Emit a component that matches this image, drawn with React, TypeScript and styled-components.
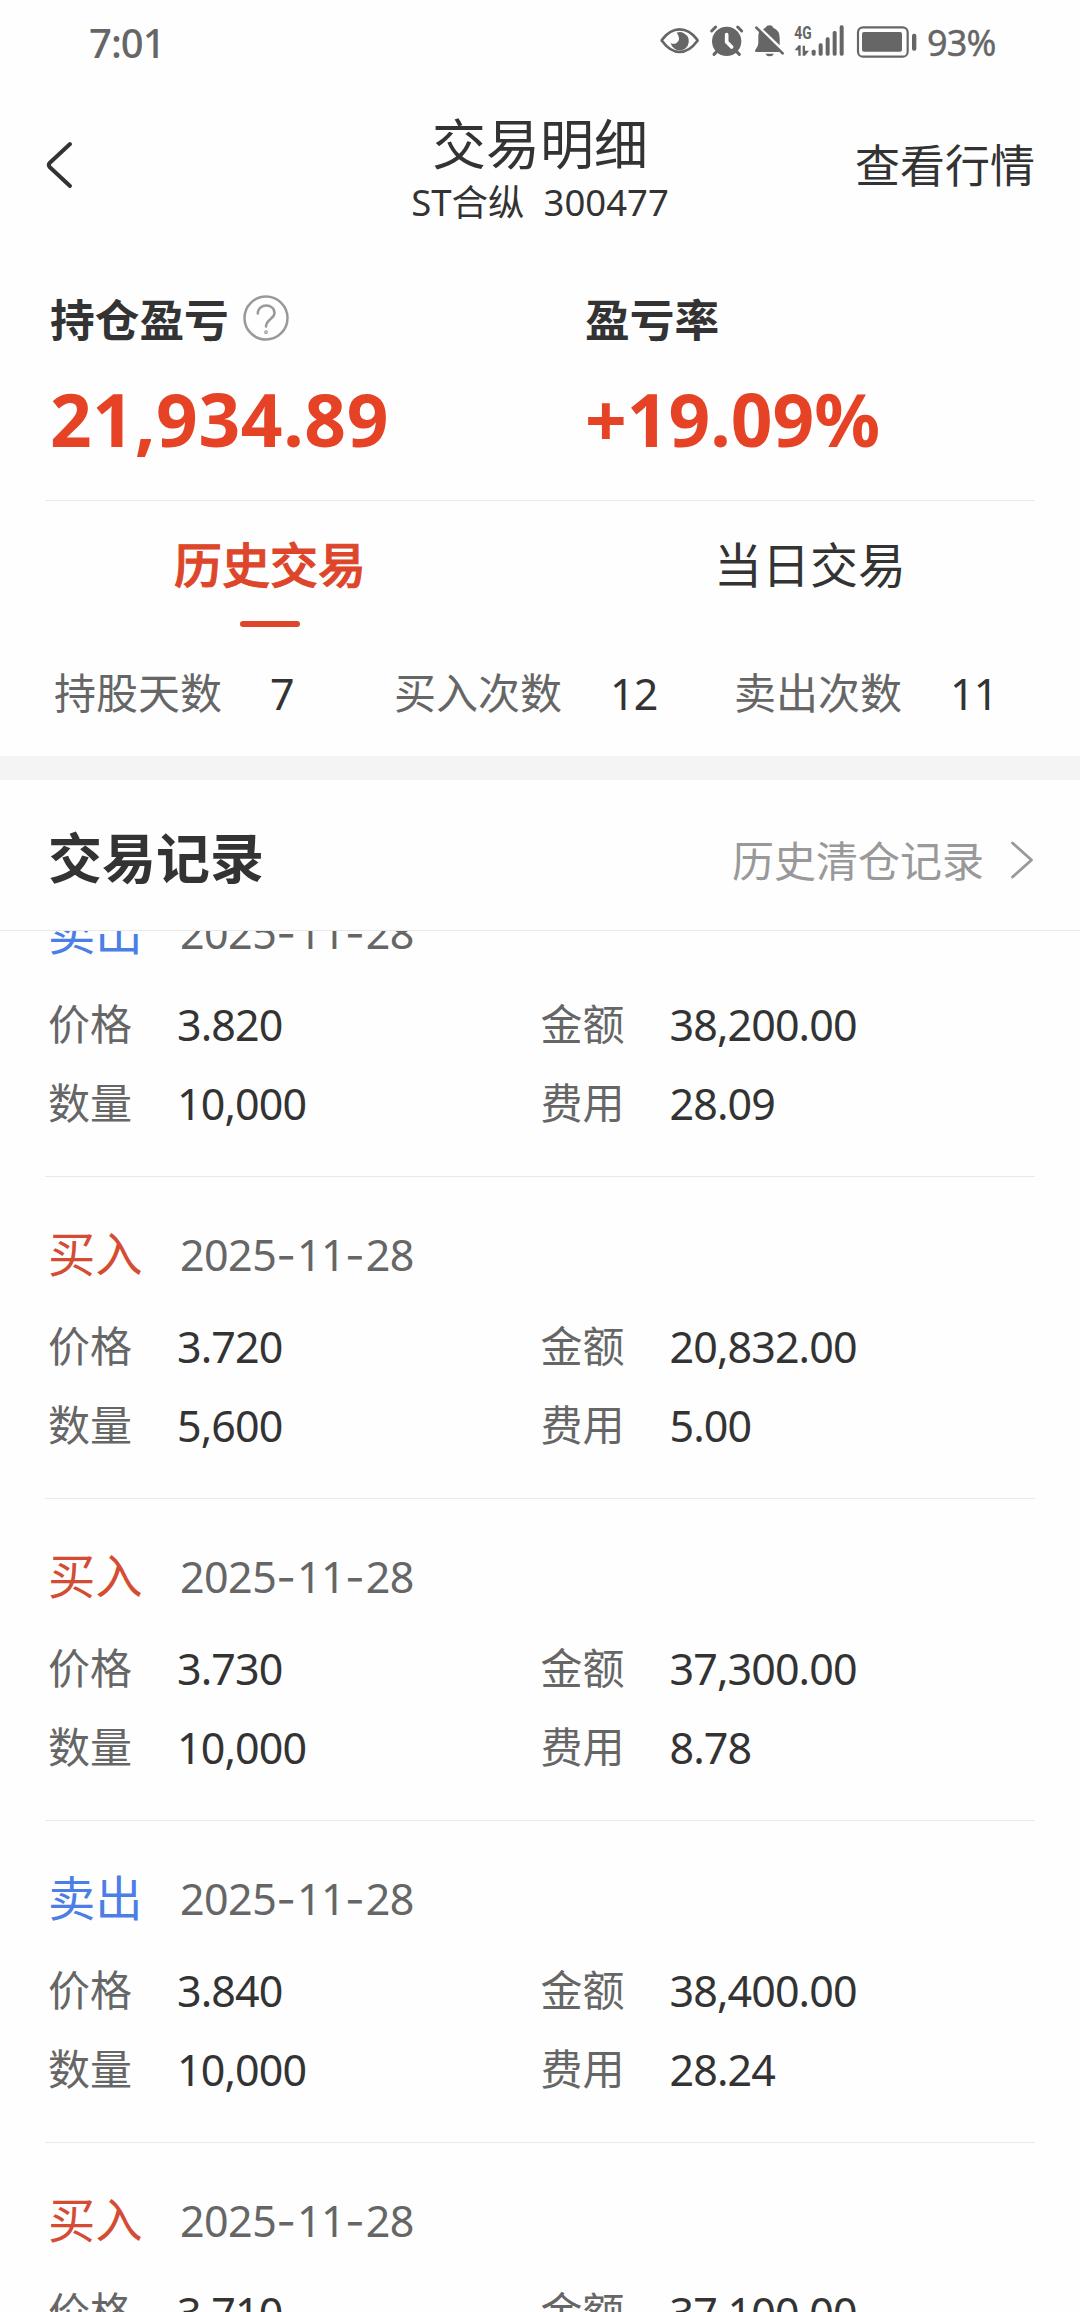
import React from "react";
import styled, { createGlobalStyle } from "styled-components";

const C = {
  bg: "#fefefe",
  text: "#333333",
  sub: "#666666",
  mute: "#999999",
  line: "#e9e9e9",
  band: "#f4f4f4",
  red: "#e64226",
  tabRed: "#dd462a",
  buy: "#d44c33",
  sell: "#4c7fe6",
};

const Global = createGlobalStyle`
  * { box-sizing: border-box; }
  body {
    margin: 0;
    background: ${C.bg};
    color: ${C.text};
    font-family: "Noto Sans", "Noto Sans CJK SC", sans-serif;
    -webkit-font-smoothing: antialiased;
  }
`;

const Screen = styled.div`
  width: 1080px;
  height: 2312px;
  display: flex;
  flex-direction: column;
  overflow: hidden;
  background: ${C.bg};
`;

/* Status bar */
const StatusBar = styled.div`
  height: 84px;
  flex: none;
  display: flex;
  align-items: center;
  justify-content: space-between;
  padding: 0 84px 0 89px;
  color: ${C.sub};
`;
const Clock = styled.span`
  font-size: 40px;
  line-height: 60px;
  letter-spacing: -1px;
  font-weight: 500;
  padding-top: 1px;
`;
const StatusIcons = styled.div`
  display: flex;
  align-items: center;
`;
const Glyph = styled.svg<{ $w: number; $gap: number }>`
  display: block;
  width: ${(p) => p.$w}px;
  height: 34px;
  margin-right: ${(p) => p.$gap}px;
  margin-top: -3px;
  fill: ${C.sub};
  overflow: visible;
`;
const Percent = styled.span`
  width: 69px;
  font-size: 36px;
  line-height: 60px;
  letter-spacing: -0.8px;
  white-space: nowrap;
  padding-top: 1px;
  -webkit-text-stroke: 0.4px ${C.sub};
`;

/* Header */
const Header = styled.header`
  height: 164px;
  flex: none;
  display: grid;
  grid-template-columns: 1fr auto 1fr;
  align-items: center;
  padding: 0 45px;
`;
const Back = styled.svg`
  display: block;
  width: 30px;
  height: 50px;
  margin-top: -2px;
  fill: none;
  stroke: ${C.text};
  stroke-width: 4;
  stroke-linecap: round;
  stroke-linejoin: round;
`;
const Heading = styled.div`
  margin-top: 12px;
  text-align: center;
`;
const Title = styled.div`
  font-size: 54px;
  line-height: 60px;
`;
const Subtitle = styled.div`
  font-size: 36.5px;
  line-height: 57px;
  white-space: pre;
`;
const HeaderLink = styled.div`
  justify-self: end;
  font-size: 45px;
  line-height: 60px;
`;

/* Summary */
const Summary = styled.section`
  height: 252px;
  flex: none;
  display: grid;
  grid-template-columns: 535px 1fr;
  padding: 42px 0 0 50px;
`;
const SummaryLabel = styled.div`
  display: flex;
  align-items: center;
  gap: 14px;
  font-size: 44.7px;
  line-height: 60px;
  font-weight: 700;
`;
const Help = styled.svg`
  display: block;
  width: 46px;
  height: 46px;
  margin-top: -4px;
  fill: none;
  stroke: ${C.mute};
  stroke-width: 2.5;
  stroke-linecap: round;
`;
const SummaryValue = styled.div<{ $track: number }>`
  margin-top: 24px;
  font-size: 73px;
  line-height: 90px;
  font-weight: 700;
  letter-spacing: ${(p) => p.$track}px;
  color: ${C.red};
`;
const Divider = styled.div`
  height: 1px;
  flex: none;
  margin: 0 45px;
  background: ${C.line};
`;

/* Tabs */
const Tabs = styled.nav`
  height: 126px;
  flex: none;
  display: grid;
  grid-template-columns: 1fr 1fr;
`;
const Tab = styled.div<{ $active?: boolean }>`
  display: flex;
  flex-direction: column;
  align-items: center;
  gap: 26px;
  padding-top: 34px;
  font-size: 48px;
  line-height: 60px;
  font-weight: ${(p) => (p.$active ? 500 : 400)};
  color: ${(p) => (p.$active ? C.tabRed : C.text)};
  -webkit-text-stroke: ${(p) => (p.$active ? `1px ${C.tabRed}` : "0")};
`;
const Indicator = styled.div`
  width: 60px;
  height: 6px;
  border-radius: 3px;
  background: ${C.tabRed};
`;

/* Counters */
const Stats = styled.div`
  height: 129px;
  flex: none;
  display: grid;
  grid-template-columns: repeat(3, 340px);
  align-items: center;
  padding: 2px 0 0 54px;
`;
const Stat = styled.div`
  display: flex;
  gap: 48px;
  line-height: 60px;
`;
const Label = styled.span`
  font-size: 42px;
  color: ${C.sub};
`;
const Num = styled.span`
  margin: 1px 0 -1px;
  font-size: 43px;
  letter-spacing: -0.9px;
`;
const Band = styled.div`
  height: 24px;
  flex: none;
  background: ${C.band};
`;

/* Records */
const RecordsHeader = styled.div`
  height: 151px;
  flex: none;
  display: flex;
  align-items: center;
  justify-content: space-between;
  padding: 5px 46px 0 48px;
  border-bottom: 1px solid ${C.line};
`;
const RecordsTitle = styled.h2`
  margin: 0;
  font-size: 54px;
  line-height: 70px;
  font-weight: 700;
`;
const More = styled.div`
  display: flex;
  align-items: center;
  gap: 26px;
  padding-top: 7px;
  font-size: 42px;
  line-height: 60px;
  color: ${C.mute};
`;
const Chevron = styled.svg`
  display: block;
  width: 24px;
  height: 40px;
  margin-top: -2px;
  fill: none;
  stroke: ${C.mute};
  stroke-width: 2.8;
  stroke-linecap: round;
  stroke-linejoin: round;
`;
const List = styled.div`
  flex: 1;
  min-height: 0;
  overflow: hidden;
`;
const Scrolled = styled.div`
  margin-top: -76px;
  padding: 0 45px;
`;
const Row = styled.article`
  height: 322px;
  padding: 48px 0 0 3px;
  border-bottom: 1px solid ${C.line};
`;
const RowHead = styled.div`
  display: flex;
  gap: 38px;
  line-height: 60px;
  margin-bottom: 31px;
`;
const Side = styled.span<{ $buy: boolean }>`
  width: 94px;
  margin: -1px 0 1px;
  font-size: 47.3px;
  white-space: nowrap;
  color: ${(p) => (p.$buy ? C.buy : C.sell)};
`;
const DateText = styled.span`
  font-size: 43px;
  letter-spacing: -0.55px;
  color: ${C.sub};
`;
const Dash = styled.span`
  font-family: Inter, sans-serif;
  letter-spacing: 0.9px;
`;
const Fields = styled.div`
  display: grid;
  grid-template-columns: 492.5px 1fr;
  row-gap: 19px;
`;
const Field = styled.div`
  display: flex;
  gap: 45px;
  line-height: 60px;
`;

const records = [
  { buy: false, date: "2025-11-28", price: "3.820", amount: "38,200.00", qty: "10,000", fee: "28.09" },
  { buy: true, date: "2025-11-28", price: "3.720", amount: "20,832.00", qty: "5,600", fee: "5.00" },
  { buy: true, date: "2025-11-28", price: "3.730", amount: "37,300.00", qty: "10,000", fee: "8.78" },
  { buy: false, date: "2025-11-28", price: "3.840", amount: "38,400.00", qty: "10,000", fee: "28.24" },
];

const lastRecord = { date: "2025-11-28", price: "3.710", amount: "37,100.00" };

const stats = [
  ["持股天数", "7"],
  ["买入次数", "12"],
  ["卖出次数", "11"],
];

function DateLabel({ value }: { value: string }) {
  const [y, m, d] = value.split("-");
  return (
    <DateText>
      {y}
      <Dash>-</Dash>
      {m}
      <Dash>-</Dash>
      {d}
    </DateText>
  );
}

function StatusGlyphs() {
  return (
    <>
      <Glyph $w={40} $gap={10} viewBox="64 70 120 102">
        <path d="M71 122 Q68 119 71 116 Q94 86 123 86 Q152 86 175 116 Q178 119 175 122 Q152 154 123 154 Q94 154 71 122Z" fill="none" stroke={C.sub} strokeWidth="8" strokeLinejoin="round" />
        <path d="M114 96 A27.5 27.5 0 1 1 96 126 Q106 133 114 126 Q124 119 120 108 Q118 101 114 96Z" />
      </Glyph>
      <Glyph $w={34} $gap={9.3} viewBox="214 70 102 102">
        <circle cx="264" cy="122" r="44" />
        <path d="M219 91 L231 79 M309 91 L297 79" stroke={C.sub} strokeWidth="9" strokeLinecap="round" />
        <path d="M226 161 L237 150 M302 161 L291 150" stroke={C.sub} strokeWidth="9" strokeLinecap="round" />
        <path d="M264 102 V124 L279 139" fill="none" stroke={C.bg} strokeWidth="11" strokeLinecap="round" strokeLinejoin="round" />
      </Glyph>
      <Glyph $w={31} $gap={9.7} viewBox="344 70 93 102">
        <path d="M378 81 Q382 74 391 74 Q399 74 402 81 Q421 89 421 111 V134 L371 86 Q374 83 378 81Z" />
        <path d="M360 92 L420 151 Q421 154 417 154 H350 Q345 153 348 148 Q357 137 357 128 V106 Q357 98 360 92Z" />
        <path d="M378 159 H404 Q400 167 391 167 Q382 167 378 159Z" />
        <path d="M351 81 L430 158" stroke={C.sub} strokeWidth="8" strokeLinecap="round" />
      </Glyph>
      <Glyph $w={51} $gap={10.7} viewBox="466 70 153 102">
        <text x="467" y="114" fontFamily="Roboto, sans-serif" fontWeight="700" fontSize="56" textLength="52" lengthAdjust="spacingAndGlyphs">4G</text>
        <path d="M468 149 L480 134 H486 V165 H479 V149Z M492 135 H499 V150 H511 L499 165 H492Z" />
        <rect x="519" y="147" width="12" height="18" rx="5" />
        <rect x="540" y="128" width="12" height="37" rx="5" />
        <rect x="561" y="110" width="12" height="55" rx="5" />
        <rect x="582" y="91" width="12" height="74" rx="5" />
        <rect x="603" y="74" width="12" height="91" rx="5" />
      </Glyph>
      <Glyph $w={61} $gap={10} viewBox="651 70 183 102">
        <rect x="657" y="80" width="149" height="88" rx="15" fill="none" stroke={C.sub} strokeWidth="6.5" />
        <rect x="669" y="94" width="120" height="59" rx="6" />
        <rect x="819" y="99" width="13" height="51" rx="6" />
      </Glyph>
    </>
  );
}

export default function App() {
  return (
    <Screen>
      <Global />
      <StatusBar>
        <Clock>7:01</Clock>
        <StatusIcons>
          <StatusGlyphs />
          <Percent>93%</Percent>
        </StatusIcons>
      </StatusBar>

      <Header>
        <Back viewBox="0 0 30 50">
          <path d="M25 4 L4.6 23 Q3 25 4.6 27 L25 46" />
        </Back>
        <Heading>
          <Title>交易明细</Title>
          <Subtitle>{"ST合纵  300477"}</Subtitle>
        </Heading>
        <HeaderLink>查看行情</HeaderLink>
      </Header>

      <Summary>
        <div>
          <SummaryLabel>
            持仓盈亏
            <Help viewBox="0 0 46 46">
              <circle cx="23" cy="23" r="21.5" />
              <path d="M14.8 18.5 C14.8 8 31.5 8 31.5 18 C31.5 24 23 24 23 31.5" />
              <circle cx="23" cy="37.2" r="0.6" />
            </Help>
          </SummaryLabel>
          <SummaryValue $track={0.6}>21,934.89</SummaryValue>
        </div>
        <div>
          <SummaryLabel>盈亏率</SummaryLabel>
          <SummaryValue $track={0}>+19.09%</SummaryValue>
        </div>
      </Summary>
      <Divider />

      <Tabs>
        <Tab $active>
          历史交易
          <Indicator />
        </Tab>
        <Tab>当日交易</Tab>
      </Tabs>

      <Stats>
        {stats.map(([label, value]) => (
          <Stat key={label}>
            <Label>{label}</Label>
            <Num>{value}</Num>
          </Stat>
        ))}
      </Stats>
      <Band />

      <RecordsHeader>
        <RecordsTitle>交易记录</RecordsTitle>
        <More>
          历史清仓记录
          <Chevron viewBox="0 0 24 40">
            <path d="M2.5 3 L21.5 20 L2.5 37" />
          </Chevron>
        </More>
      </RecordsHeader>

      <List>
        <Scrolled>
          {records.map((r, i) => (
            <Row key={i}>
              <RowHead>
                <Side $buy={r.buy}>{r.buy ? "买入" : "卖出"}</Side>
                <DateLabel value={r.date} />
              </RowHead>
              <Fields>
                <Field><Label>价格</Label><Num>{r.price}</Num></Field>
                <Field><Label>金额</Label><Num>{r.amount}</Num></Field>
                <Field><Label>数量</Label><Num>{r.qty}</Num></Field>
                <Field><Label>费用</Label><Num>{r.fee}</Num></Field>
              </Fields>
            </Row>
          ))}
          <Row>
            <RowHead>
              <Side $buy>买入</Side>
              <DateLabel value={lastRecord.date} />
            </RowHead>
            <Fields>
              <Field><Label>价格</Label><Num>{lastRecord.price}</Num></Field>
              <Field><Label>金额</Label><Num>{lastRecord.amount}</Num></Field>
            </Fields>
          </Row>
        </Scrolled>
      </List>
    </Screen>
  );
}
